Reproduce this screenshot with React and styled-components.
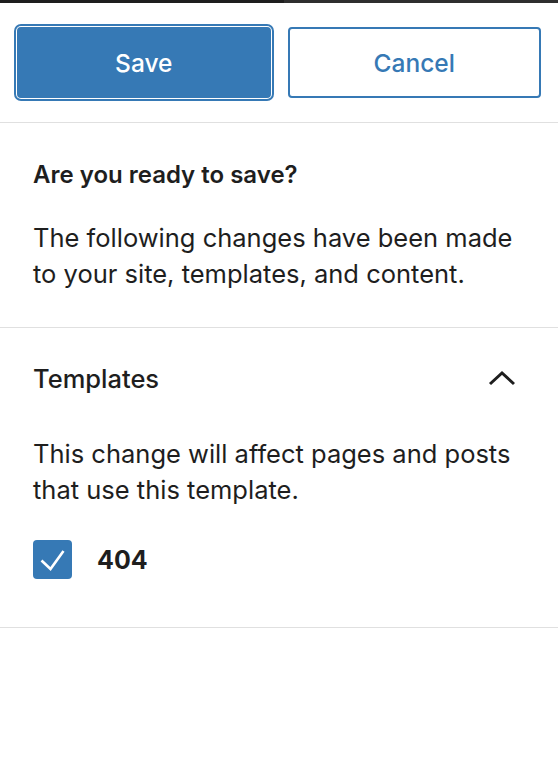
import React from "react";
import styled, { createGlobalStyle } from "styled-components";

const GlobalStyle = createGlobalStyle`
  html, body {
    margin: 0;
    padding: 0;
    background: #fff;
  }
  body {
    font-family: Inter, "Noto Sans", "Liberation Sans", sans-serif;
    color: #1e1e1e;
  }
`;

const BLUE = "#3679b5";

const Panel = styled.div`
  width: 558px;
  min-height: 766px;
  background: #fff;
  display: flex;
  flex-direction: column;
`;

const TopStrip = styled.div`
  height: 3px;
  display: flex;
  background: #1e1e1e;
`;

const StripPart = styled.div`
  flex: ${(p) => p.grow};
  background: ${(p) => p.tone};
`;

const Actions = styled.div`
  display: flex;
  gap: 17px;
  padding: 24px 17px 24px;
  border-bottom: 1px solid #e0e0e0;
`;

const Button = styled.button`
  flex: 1;
  height: 71px;
  border-radius: 4px;
  font-family: inherit;
  font-size: 24.5px;
  font-weight: 500;
  cursor: pointer;
  border: 2px solid ${BLUE};
  background: ${(p) => (p.$primary ? BLUE : "#fff")};
  color: ${(p) => (p.$primary ? "#fff" : BLUE)};
  box-shadow: ${(p) =>
    p.$primary ? `0 0 0 1px #fff, 0 0 0 3px ${BLUE}` : "none"};
`;

const Section = styled.section`
  padding: ${(p) => p.$pad};
  border-bottom: 1px solid #e0e0e0;
`;

const Heading = styled.h2`
  margin: 0;
  font-size: 24px;
  line-height: 32px;
  font-weight: 600;
`;

const Body = styled.p`
  margin: ${(p) => p.$top} 0 0;
  font-size: 25.5px;
  line-height: 36px;
  font-weight: 400;
`;

const PanelHeader = styled.div`
  display: flex;
  align-items: center;
  justify-content: space-between;
  height: 36px;
  padding-right: 12px;
`;

const PanelTitle = styled.span`
  font-size: 25.5px;
  font-weight: 500;
`;

const CheckRow = styled.label`
  display: flex;
  align-items: center;
  gap: 25px;
  margin-top: 32px;
`;

const Box = styled.span`
  width: 39px;
  height: 39px;
  border-radius: 4px;
  background: ${BLUE};
  display: flex;
  align-items: center;
  justify-content: center;
`;

const CheckLabel = styled.span`
  font-size: 25px;
  font-weight: 700;
`;

const ChevronUp = () => (
  <svg width="28" height="18" viewBox="0 0 28 18">
    <polyline
      points="2,15 14,4 26,15"
      fill="none"
      stroke="#1e1e1e"
      strokeWidth="3"
    />
  </svg>
);

const Tick = () => (
  <svg width="39" height="39" viewBox="0 0 39 39">
    <polyline
      points="8.5,20.5 17.5,29 30.5,11"
      fill="none"
      stroke="#fff"
      strokeWidth="2.6"
    />
  </svg>
);

export default function App() {
  return (
    <Panel>
      <GlobalStyle />
      <TopStrip>
        <StripPart grow="284" tone="#1e1e1e" />
        <StripPart grow="274" tone="#2f2f2f" />
      </TopStrip>
      <Actions>
        <Button $primary>Save</Button>
        <Button>Cancel</Button>
      </Actions>
      <Section $pad="36px 30px 35px 33px">
        <Heading>Are you ready to save?</Heading>
        <Body $top="29px">
          The following changes have been made to your site, templates, and
          content.
        </Body>
      </Section>
      <Section $pad="32px 30px 48px 33px">
        <PanelHeader>
          <PanelTitle>Templates</PanelTitle>
          <ChevronUp />
        </PanelHeader>
        <Body $top="40px">
          This change will affect pages and posts that use this template.
        </Body>
        <CheckRow>
          <Box>
            <Tick />
          </Box>
          <CheckLabel>404</CheckLabel>
        </CheckRow>
      </Section>
    </Panel>
  );
}
